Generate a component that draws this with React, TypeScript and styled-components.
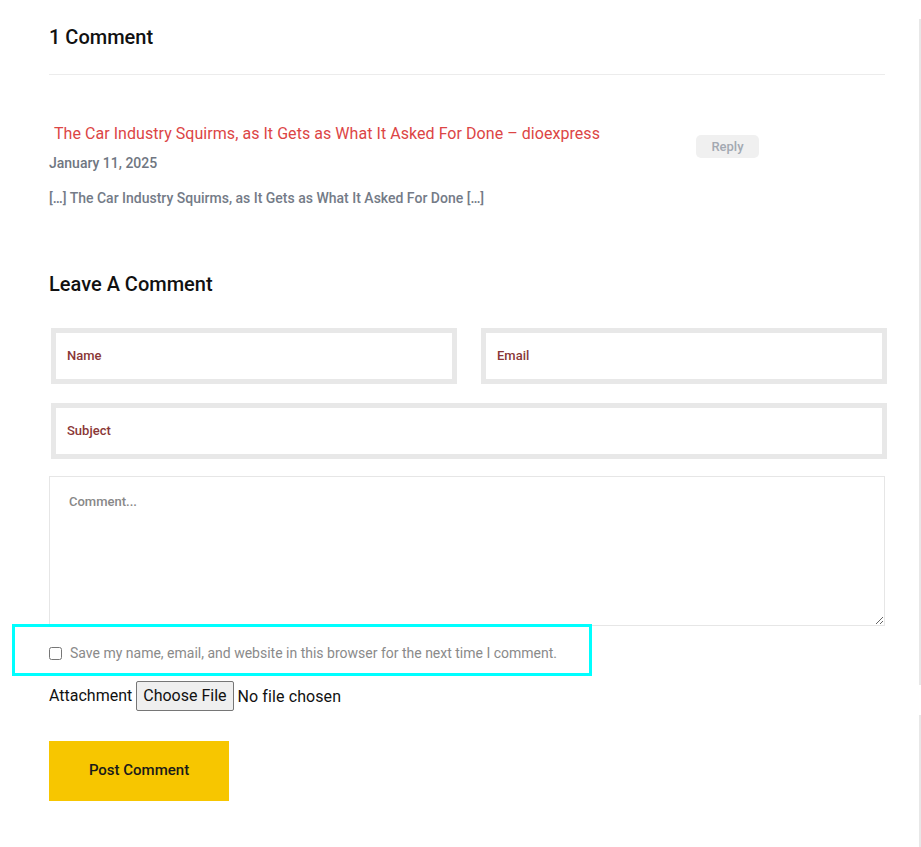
import React from "react";
import styled, { createGlobalStyle } from "styled-components";

const Global = createGlobalStyle`
  html, body { margin: 0; padding: 0; overflow: hidden; background: #fff; }
  body { font-family: Roboto, "Liberation Sans", Arial, sans-serif; color: #111; }
  * { box-sizing: border-box; }
`;

const Page = styled.div`
  display: flex;
  align-items: flex-start;
  gap: 34px;
  padding-left: 49px;
  width: 100%;
  height: 847px;
  overflow: hidden;
`;

const Main = styled.main`
  width: 836px;
  flex-shrink: 0;
  display: flex;
  flex-direction: column;
  padding-top: 25px;
`;

const Heading = styled.h3`
  margin: 0;
  font-size: 20px;
  line-height: 24px;
  font-weight: 500;
  color: #111;
`;

const Divider = styled.hr`
  margin: 25px 0 0;
  border: 0;
  height: 1px;
  background: #ececec;
`;

const CommentItem = styled.div`
  display: grid;
  grid-template-columns: 647px auto;
  align-items: start;
  margin-top: 47px;
`;

const CommentMeta = styled.div`
  display: flex;
  flex-direction: column;
  gap: 7px;
`;

const CommentTitle = styled.a`
  font-size: 16px;
  line-height: 24px;
  color: #dc4545;
  text-decoration: none;
  white-space: nowrap;
  padding-left: 5px;
  letter-spacing: 0.05px;
`;

const DateText = styled.div`
  font-size: 14px;
  line-height: 20px;
  font-weight: 500;
  color: #6f7681;
`;

const ReplyButton = styled.button`
  margin-top: 13px;
  width: 63px;
  height: 23px;
  border: 0;
  border-radius: 5px;
  background: #f0f0f0;
  color: #a3a9b2;
  font-family: inherit;
  font-size: 13px;
  font-weight: 500;
  padding: 0;
  justify-self: start;
`;

const Excerpt = styled.p`
  margin: 15px 0 0;
  font-size: 14px;
  line-height: 20px;
  font-weight: 500;
  color: #747b87;
`;

const FormHeading = styled(Heading)`
  margin-top: 64px;
`;

const Form = styled.form`
  display: flex;
  flex-direction: column;
  margin-top: 32px;
`;

const FieldRow = styled.div`
  display: grid;
  grid-template-columns: 1fr 1fr;
  gap: 24px;
  margin-left: 2px;
  margin-right: -2px;
`;

const TextField = styled.input`
  width: 100%;
  height: 56px;
  border: 5px solid #e8e8e8;
  background: #fff;
  padding: 0 11px 2px;
  font-family: inherit;
  font-size: 13px;
  font-weight: 500;
  outline: none;
  &::placeholder { color: #8a3737; opacity: 1; }
`;

const SingleRow = styled.div`
  margin-left: 2px;
  margin-right: -2px;
  margin-top: 19px;
`;

const CommentBox = styled.textarea`
  display: block;
  width: 100%;
  height: 150px;
  margin-top: 17px;
  border: 1px solid #e6e6e6;
  padding: 17px 19px;
  font-family: inherit;
  font-size: 13px;
  font-weight: 500;
  resize: vertical;
  outline: none;
  &::placeholder { color: #888; opacity: 1; }
`;

const ConsentRow = styled.label`
  position: relative;
  display: flex;
  align-items: center;
  gap: 8px;
  height: 20px;
  margin-top: 17px;
  font-size: 14px;
  color: #8a8a8a;
`;

const Check = styled.input`
  width: 13px;
  height: 13px;
  margin: 0;
`;

const Highlight = styled.span`
  position: absolute;
  left: -37px;
  top: -19px;
  width: 580px;
  height: 52px;
  border: 3px solid #00ffff;
  pointer-events: none;
`;

const AttachRow = styled.div`
  display: flex;
  align-items: center;
  gap: 4px;
  margin-top: 18px;
  height: 30px;
  padding-bottom: 1px;
  font-size: 16px;
  color: #111;
`;

const FileInput = styled.input`
  font-family: inherit;
  font-size: 16px;
  color: #111;
  letter-spacing: 0.1px;
  &::file-selector-button {
    font-family: inherit;
    font-size: 16px;
    height: 30px;
    padding: 0 6px;
    margin-right: 4px;
    border: 1px solid #767676;
    border-radius: 2px;
    background: #efefef;
    color: #111;
  }
`;

const SubmitButton = styled.button`
  margin-top: 30px;
  width: 180px;
  height: 60px;
  border: 0;
  padding: 0 0 2px;
  background: #f7c600;
  color: #1a1a1a;
  font-family: inherit;
  font-size: 15px;
  font-weight: 500;
`;

const Sidebar = styled.aside`
  flex: 1;
  min-width: 0;
  display: flex;
  flex-direction: column;
  gap: 30px;
  padding-top: 19px;
`;

const Widget = styled.div<{ $h: number }>`
  height: ${(p) => p.$h}px;
  border: 2px solid #e8e8e8;
  border-right: 0;
`;

export default function App() {
  return (
    <>
      <Global />
      <Page>
        <Main>
          <Heading>1 Comment</Heading>
          <Divider />
          <CommentItem>
            <CommentMeta>
              <CommentTitle href="#">
                The Car Industry Squirms, as It Gets as What It Asked For Done – dioexpress
              </CommentTitle>
              <DateText>January 11, 2025</DateText>
            </CommentMeta>
            <ReplyButton type="button">Reply</ReplyButton>
          </CommentItem>
          <Excerpt>[…] The Car Industry Squirms, as It Gets as What It Asked For Done […]</Excerpt>

          <FormHeading>Leave A Comment</FormHeading>
          <Form onSubmit={(e) => e.preventDefault()}>
            <FieldRow>
              <TextField placeholder="Name" />
              <TextField placeholder="Email" />
            </FieldRow>
            <SingleRow>
              <TextField placeholder="Subject" />
            </SingleRow>
            <CommentBox placeholder="Comment..." />
            <ConsentRow>
              <Check type="checkbox" />
              Save my name, email, and website in this browser for the next time I comment.
              <Highlight />
            </ConsentRow>
            <AttachRow>
              Attachment
              <FileInput type="file" />
            </AttachRow>
            <SubmitButton type="submit">Post Comment</SubmitButton>
          </Form>
        </Main>
        <Sidebar>
          <Widget $h={666} />
          <Widget $h={132} />
        </Sidebar>
      </Page>
    </>
  );
}
